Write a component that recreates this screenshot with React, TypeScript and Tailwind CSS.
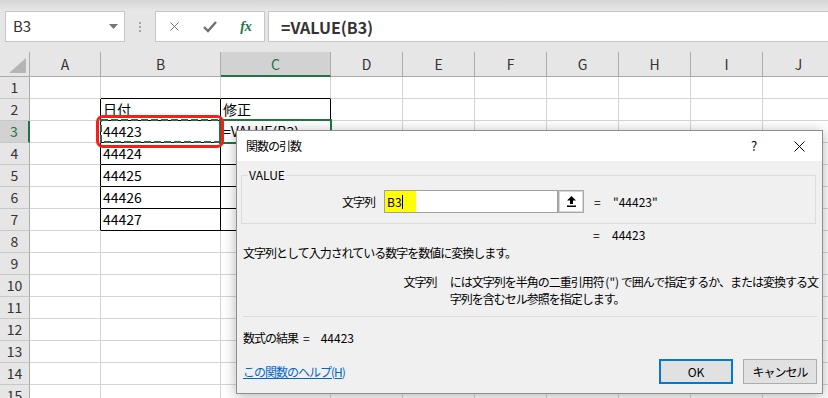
import { X } from "lucide-react"

const COLS = ["A", "B", "C", "D", "E", "F", "G", "H", "I", "J"]
const ROWS = Array.from({ length: 15 }, (_, i) => i + 1)

const cells: Record<string, string> = {
  B2: "日付",
  C2: "修正",
  B3: "44423",
  C3: "=VALUE(B3)",
  B4: "44424",
  B5: "44425",
  B6: "44426",
  B7: "44427",
}

function cellClass(col: string, row: number) {
  const inTable = row >= 2 && row <= 7
  const right =
    inTable && (col === "A" || col === "B" || col === "C") ? "border-r-black" : "border-r-[#d4d4d4]"
  const bottom =
    row >= 1 && row <= 7 && (col === "B" || col === "C") ? "border-b-black" : "border-b-[#d4d4d4]"
  return `border-r border-b ${right} ${bottom} pl-[2px] leading-[21px] whitespace-nowrap overflow-hidden`
}

function FormulaBar() {
  return (
    <div className="h-[52px] bg-[linear-gradient(#d6d6d6,#e6e6e6_10px)] flex items-start pt-[11px] pl-[5px]">
      {/* 名前ボックス */}
      <div className="w-[120px] h-[31px] shrink-0 border border-[#c6c6c6] bg-white flex items-center pl-[7px] text-[15px] text-[#333]">
        <span>B3</span>
        <svg className="ml-auto mr-[6px]" width="9" height="5" viewBox="0 0 9 5">
          <polygon points="0,0 9,0 4.5,5" fill="#767676" />
        </svg>
      </div>

      <div className="w-[30px] h-[31px] shrink-0 flex flex-col items-center justify-center gap-[2px]">
        <span className="w-[2px] h-[2px] bg-[#a6a6a6]" />
        <span className="w-[2px] h-[2px] bg-[#a6a6a6]" />
        <span className="w-[2px] h-[2px] bg-[#a6a6a6]" />
      </div>

      {/* キャンセル / 入力 / 関数の挿入 */}
      <div className="w-[110px] h-[31px] shrink-0 border border-[#c6c6c6] bg-white flex items-center">
        <span className="w-[36px] flex justify-center">
          <X size={15} strokeWidth={1.6} color="#6f6f6f" />
        </span>
        <span className="w-[36px] flex justify-center">
          <svg width="14" height="12" viewBox="0 0 14 12">
            <polyline points="1,6 5,10 13,1" fill="none" stroke="#6f6f6f" strokeWidth="2.4" />
          </svg>
        </span>
        <span className="w-[36px] text-center font-['Liberation_Serif',serif] italic font-bold text-[14px] text-[#217346]">
          fx
        </span>
      </div>

      <div className="ml-[3px] w-[570px] h-[31px] shrink-0 border border-[#c6c6c6] bg-white flex items-center pl-[12px] text-[16px] font-semibold text-[#333]">
        =VALUE(B3)
      </div>
    </div>
  )
}

function Sheet() {
  return (
    <div className="grid grid-cols-[30px_71px_120px_110px_repeat(7,72px)] text-[14px] text-black">
      {/* 列見出し */}
      <div className="h-[25px] bg-[#e6e6e6] border-r border-b border-[#ababab] flex items-end justify-end pr-[3px] pb-[3px]">
        <svg width="17" height="15" viewBox="0 0 17 15">
          <polygon points="17,0 17,15 0,15" fill="#b5b5b5" />
        </svg>
      </div>
      {COLS.map((c) =>
        c === "C" ? (
          <div
            key={c}
            className="h-[25px] bg-[#d2d2d2] border-r border-r-[#ababab] border-b-2 border-b-[#217346] text-center leading-[24px] text-[#217346]"
          >
            {c}
          </div>
        ) : (
          <div
            key={c}
            className="h-[25px] bg-[#e6e6e6] border-r border-b border-[#ababab] text-center leading-[24px] text-[#333]"
          >
            {c}
          </div>
        )
      )}

      {ROWS.map((r) => (
        <div key={r} className="contents">
          {r === 3 ? (
            <div className="h-[22px] bg-[#d2d2d2] border-r-2 border-r-[#217346] border-b border-b-[#c8c8c8] text-center leading-[21px] text-[#217346]">
              {r}
            </div>
          ) : (
            <div className="h-[22px] bg-[#e6e6e6] border-r border-r-[#ababab] border-b border-b-[#c8c8c8] text-center leading-[21px] text-[#333]">
              {r}
            </div>
          )}
          {COLS.map((c) => (
            <div key={c} className={`h-[22px] ${cellClass(c, r)}`}>
              {cells[`${c}${r}`] ?? ""}
            </div>
          ))}
        </div>
      ))}
    </div>
  )
}

function ArgDialog() {
  return (
    <div className="absolute left-[236px] top-[130px] w-[587px] h-[264px] border border-[#8f8f8f] bg-[#f0f0f0] shadow-[0_2px_12px_rgba(0,0,0,0.3)] flex flex-col text-[12px] leading-[16px] text-black">
      {/* タイトルバー */}
      <div className="h-[30px] shrink-0 bg-white flex items-center pl-[9px]">
        <span className="tracking-[-1px]">関数の引数</span>
        <span className="ml-auto w-[44px] text-center text-[13px]">?</span>
        <span className="w-[46px] flex justify-center">
          <svg width="11" height="11" viewBox="0 0 11 11">
            <path d="M0.5 0.5 L10.5 10.5 M10.5 0.5 L0.5 10.5" stroke="#000" strokeWidth="1" />
          </svg>
        </span>
      </div>

      <div className="flex-1 px-[4px] flex flex-col">
        {/* 引数グループ */}
        <div className="relative mt-[14px] w-[575px] h-[49px] border border-[#dcdcdc]">
          <span className="absolute left-[6px] -top-[9px] bg-[#f0f0f0] px-[1px]">VALUE</span>
          <div className="mt-[14px] flex items-center">
            <span className="w-[133px] text-right tracking-[-1px]">文字列</span>
            <div className="ml-[9px] w-[174px] h-[23px] border border-[#a0a0a0] bg-white flex items-stretch">
              <span className="w-[31px] bg-[#ffff00] flex items-center pl-[2px]">
                B3
                <span className="w-[1px] h-[14px] bg-black" />
              </span>
            </div>
            <div className="w-[26px] h-[23px] border border-[#a8a8a8] shadow-[inset_0_0_0_1px_#d6d6d6] bg-white flex items-center justify-center">
              <svg width="9" height="11" viewBox="0 0 9 11">
                <polygon points="4.5,0 9,4.5 6,4.5 6,8 3,8 3,4.5 0,4.5" fill="#000" />
                <rect x="0" y="9.5" width="9" height="1.5" fill="#000" />
              </svg>
            </div>
            <span className="ml-[10px] w-[19px]">=</span>
            <span>"44423"</span>
          </div>
        </div>

        <div className="mt-[3px] h-[16px] pl-[352px] flex">
          <span className="w-[19px]">=</span>
          <span>44423</span>
        </div>

        <div className="mt-[2px] pl-[2px] tracking-[-1px]">文字列として入力されている数字を数値に変換します。</div>

        <div className="mt-[12px] flex leading-[17px]">
          <span className="w-[196px] text-right tracking-[-1px]">文字列</span>
          <span className="ml-[13px] whitespace-nowrap tracking-[-1px]">
            には文字列を半角の二重引用符 <span className="tracking-normal">(")</span> で囲んで指定するか、または変換する文
            <br />
            字列を含むセル参照を指定します。
          </span>
        </div>

        <div className="mt-[9px] ml-[2px] w-[574px] h-[1px] bg-[#dadada]" />

        <div className="mt-[13px] pl-[2px] flex">
          <span className="tracking-[-1px]">数式の結果</span>
          <span className="ml-[5px]">=</span>
          <span className="ml-[11px]">44423</span>
        </div>

        <div className="mt-[13px] flex items-center">
          <a className="pl-[2px] text-[#0066cc] underline tracking-[-1px]">この関数のヘルプ(H)</a>
          <button className="ml-auto w-[74px] h-[25px] border-2 border-[#0078d7] bg-[#e1e1e1]">OK</button>
          <button className="ml-[10px] mr-[1px] w-[74px] h-[25px] border border-[#adadad] bg-[#e1e1e1] tracking-[-1px]">
            キャンセル
          </button>
        </div>
      </div>
    </div>
  )
}

export default function App() {
  return (
    <div className="relative w-[828px] h-[398px] overflow-hidden bg-white font-['Noto_Sans_CJK_JP','Noto_Sans',sans-serif]">
      <FormulaBar />
      <Sheet />

      {/* アクティブセル C3 */}
      <div className="absolute left-[219px] top-[119px] w-[113px] h-[25px] border-2 border-[#217346]" />

      {/* 参照セル B3 の破線 */}
      <svg className="absolute left-[99px] top-[118px]" width="123" height="26">
        <rect x="2" y="2" width="119" height="22" fill="none" stroke="#217346" strokeWidth="2" strokeDasharray="7 3" />
      </svg>

      {/* 赤枠 */}
      <div className="absolute left-[96px] top-[115px] w-[128px] h-[33px] border-[3px] border-[#ff1a1a] rounded-[7px]" />

      <ArgDialog />
    </div>
  )
}
